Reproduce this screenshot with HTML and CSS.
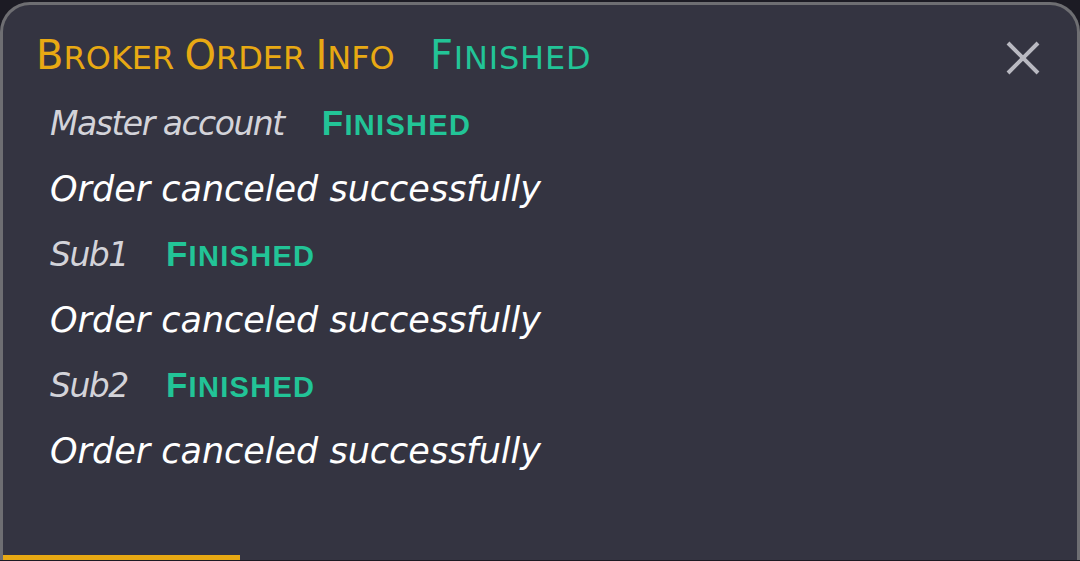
FILE: index.html
```html
<!DOCTYPE html>
<html>
<head>
    <title>Broker Order Info</title>
    <link rel="stylesheet" href="styles.css">
</head>
<body>
    <div class="card">
        <div class="header">
            <div class="title">
                <span class="title-name"><span class="big">B</span>roker <span class="big">O</span>rder <span class="big">I</span>nfo</span>
                <span class="title-status"><span class="big">F</span>inished</span>
            </div>
            <button class="close" type="button" aria-label="Close">
                <svg width="34" height="34" viewBox="0 0 34 34">
                    <path d="M2 2 L32 32 M32 2 L2 32" stroke="#b9b9c1" stroke-width="4" fill="none"/>
                </svg>
            </button>
        </div>

        <div class="account">
            <div class="account-row">
                <span class="account-name">Master account</span>
                <span class="status"><span class="big">F</span>inished</span>
            </div>
            <div class="message">Order canceled successfully</div>
        </div>

        <div class="account">
            <div class="account-row">
                <span class="account-name">Sub1</span>
                <span class="status"><span class="big">F</span>inished</span>
            </div>
            <div class="message">Order canceled successfully</div>
        </div>

        <div class="account">
            <div class="account-row">
                <span class="account-name">Sub2</span>
                <span class="status"><span class="big">F</span>inished</span>
            </div>
            <div class="message">Order canceled successfully</div>
        </div>

        <div class="progress"></div>
    </div>
</body>
</html>
```

FILE: styles.css
```css
html, body {
    margin: 0;
    padding: 0;
    background-color: #1c1b24;
    height: 561px;
    overflow: hidden;
}

.card {
    box-sizing: border-box;
    height: 558px;
    margin-top: 2px;
    background-color: #343441;
    border: 3px solid #6e6e72;
    border-bottom: none;
    border-radius: 30px 30px 0 0;
    padding: 0 0 0 33px;
    position: relative;
    font-family: "DejaVu Sans", sans-serif;
}

.header {
    box-sizing: border-box;
    display: flex;
    align-items: flex-start;
    height: 86px;
    padding: 30px 37px 0 0;
}

.title {
    font-size: 32px;
    line-height: 40px;
    text-transform: uppercase;
    white-space: nowrap;
}

.title .big {
    font-size: 40px;
}

.title-name {
    color: #e8a913;
}

.title-status {
    margin-left: 25px;
    letter-spacing: 0.8px;
    color: #22c497;
}

.close {
    margin: 6px 0 0 auto;
    background: none;
    border: none;
    padding: 0;
    cursor: pointer;
    display: flex;
}

.account {
    padding-left: 14px;
}

.account-row {
    height: 66px;
    line-height: 66px;
    white-space: nowrap;
}

.account-name {
    font-size: 33px;
    font-style: italic;
    letter-spacing: -1.5px;
    color: #d3d3d9;
    margin-right: 33px;
}

.status {
    font-family: "Liberation Sans", Arial, sans-serif;
    font-size: 29px;
    line-height: 1;
    font-weight: bold;
    letter-spacing: 1.3px;
    text-transform: uppercase;
    color: #22c497;
}

.status .big {
    font-size: 35px;
}

.message {
    font-size: 35px;
    font-style: italic;
    color: #ffffff;
    height: 65px;
    line-height: 65px;
    white-space: nowrap;
}

.progress {
    position: absolute;
    left: 0;
    bottom: 0;
    width: 237px;
    height: 5px;
    background-color: #e8a913;
}
```
